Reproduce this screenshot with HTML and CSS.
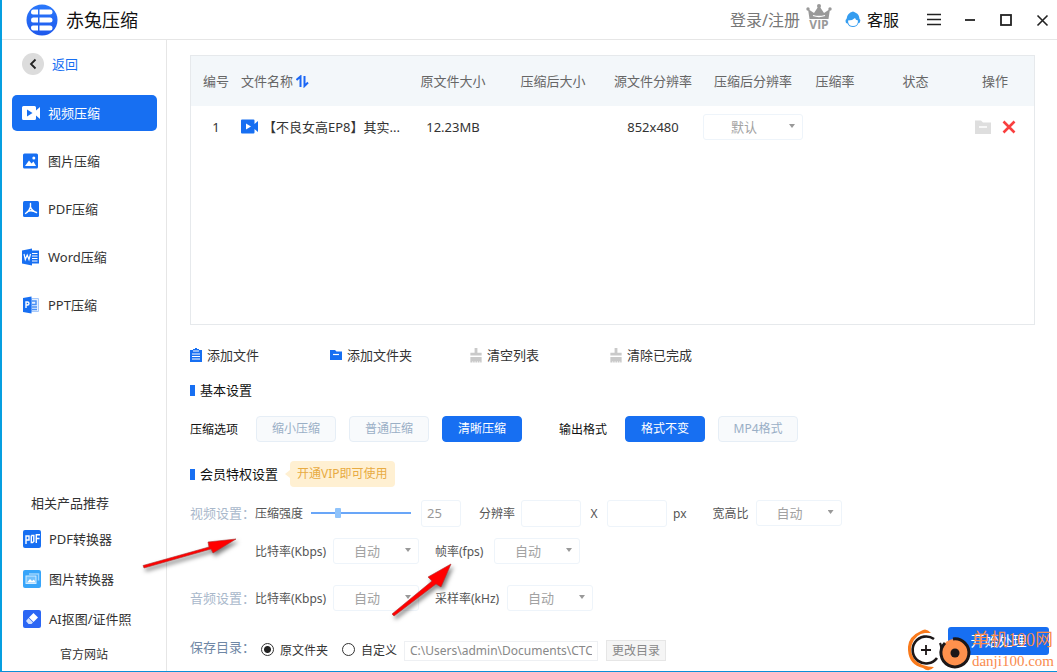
FILE: index.html
```html
<!DOCTYPE html>
<html lang="zh-CN">
<head>
<meta charset="utf-8">
<title>赤兔压缩</title>
<link rel="stylesheet" href="styles.css">
</head>
<body>
<div class="window">
  <header class="titlebar">
    <svg class="logo" viewBox="0 0 32 32" width="32" height="32" aria-hidden="true">
      <defs><linearGradient id="lg" x1="0" y1="0" x2="0" y2="1"><stop offset="0" stop-color="#2a78fb"/><stop offset="1" stop-color="#1e58ec"/></linearGradient></defs>
      <circle cx="16" cy="16" r="15.5" fill="url(#lg)"/>
      <g fill="#fff">
        <path d="M7.500 5.500H12V10.500H7Q5 10.500 5 8.500Q5 5.500 7.500 5.500ZM13.500 5.500H24Q26.500 5.500 26.500 8Q26.500 10.500 24 10.500H13.500Z"/>
        <path d="M7 13.500H12V18.500H7Q5 18.500 5 16Q5 13.500 7 13.500ZM13.500 13.500H24Q26.500 13.500 26.500 16Q26.500 18.500 24 18.500H13.500Z"/>
        <path d="M7 21.500H12V26.500H7.500Q5 26.500 5 23.500Q5 21.500 7 21.500ZM13.500 21.500H24Q26.500 21.500 26.500 24Q26.500 26.500 24 26.500H13.500Z"/>
      </g>
    </svg>
    <h1 class="app-name">赤兔压缩</h1>
    <a class="login" href="#">登录/注册</a>
    <span class="vip">
      <svg viewBox="0 0 26 15" width="26" height="15" aria-hidden="true">
        <g fill="#999"><circle cx="13" cy="2" r="2"/><circle cx="2" cy="5" r="1.700"/><circle cx="24" cy="5" r="1.700"/>
        <path d="M2 5L8 9L12 3H14L18 9L24 5L22.500 15H3.500Z"/></g>
        <path d="M7 11.500Q13 13.500 19 11.500" stroke="#fff" stroke-width="1.300" fill="none"/>
      </svg>
      <span class="vip-text">VIP</span>
    </span>
    <a class="service" href="#">
      <svg viewBox="0 0 16 17" width="16" height="17" aria-hidden="true">
        <path d="M8 0.500Q10 1 11 2Q14 3 14.500 8Q16 8.500 15 11Q14.500 12.500 13.500 12Q12 16 8 16Q4 16 2.500 12.500Q0.500 12.500 0.500 10Q0.500 8.500 1.500 8Q2 2 8 0.500Z" fill="#359df0"/>
        <path d="M3 9.500Q7.500 9.500 10 7Q10.500 9 13 9.500Q13 15 8 15Q3 15 3 9.500Z" fill="#fff"/>
      </svg>客服</a>
    <nav class="win-buttons">
      <button aria-label="菜单"><svg viewBox="0 0 16 16" width="16" height="16"><path d="M1 2.500H15M1 7.500H15M1 12.500H15" stroke="#222" stroke-width="1.600"/></svg></button>
      <button aria-label="最小化"><svg viewBox="0 0 16 16" width="16" height="16"><path d="M3 8H13" stroke="#222" stroke-width="1.800"/></svg></button>
      <button aria-label="最大化"><svg viewBox="0 0 16 16" width="16" height="16"><rect x="3" y="3" width="10" height="10" fill="none" stroke="#222" stroke-width="1.800"/></svg></button>
      <button aria-label="关闭"><svg viewBox="0 0 16 16" width="16" height="16"><path d="M3.500 3.500L13.500 13.500M13.500 3.500L3.500 13.500" stroke="#222" stroke-width="1.600"/></svg></button>
    </nav>
  </header>

  <aside class="sidebar">
    <a class="back" href="#">
      <svg viewBox="0 0 22 22" width="22" height="22" aria-hidden="true"><circle cx="11" cy="11" r="11" fill="#dcdcdc"/><path d="M13.500 6.500L9 11L13.500 15.500" fill="none" stroke="#222" stroke-width="1.800"/></svg>返回</a>
    <nav class="menu">
      <a class="item active" href="#"><svg viewBox="0 0 18 18" width="18" height="18" aria-hidden="true"><path d="M1.500 2H12.500Q14 2 14 3.500V6.500L18 3V15L14 11.500V14.500Q14 16 12.500 16H1.500Q0 16 0 14.500V3.500Q0 2 1.500 2Z" fill="#fff"/><path d="M5 5.500V12.500L10.500 9Z" fill="#176ff2"/></svg>视频压缩</a>
      <a class="item" href="#"><svg viewBox="0 0 18 18" width="18" height="18" aria-hidden="true"><rect x="1" y="1.500" width="15" height="15" rx="1.500" fill="#176ff2"/><path d="M3 14L7 8.500L9.500 11.500L11.500 9.500L14 14Z" fill="#fff"/><circle cx="11.800" cy="6" r="1.500" fill="#fff"/></svg>图片压缩</a>
      <a class="item" href="#"><svg viewBox="0 0 18 18" width="18" height="18" aria-hidden="true"><rect x="1" y="1" width="16" height="16" rx="1.500" fill="#176ff2"/><path d="M8.500 3.500V7Q7.500 11 3.500 13.500M8.500 7Q10 11 14.500 12.500M6 11.300Q9 10.300 11.500 11.300" fill="none" stroke="#fff" stroke-width="1.400" stroke-linecap="round"/></svg>PDF压缩</a>
      <a class="item" href="#"><svg viewBox="0 0 18 18" width="18" height="18" aria-hidden="true"><path d="M10 2.500H17V15.500H10Z" fill="#176ff2"/><path d="M10 5.500H15.500M10 8H15.500M10 10.500H15.500M10 13H15.500" stroke="#fff"/><path d="M0 2.500L10 0.500V17.500L0 15.500Z" fill="#176ff2"/><path d="M2 6L3.300 11.500L5.200 7L7 11.500L8.500 6" fill="none" stroke="#fff" stroke-width="1.200"/></svg>Word压缩</a>
      <a class="item" href="#"><svg viewBox="0 0 18 18" width="18" height="18" aria-hidden="true"><path d="M9.500 2.500H16.500V15.500H9.500Z" fill="#e6f0fe" stroke="#a5c8fa"/><path d="M10 5H14V8.500H10M10 11H15M10 13.500H15" stroke="#4a90f5" stroke-width="1.500" fill="none"/><path d="M1 2L9.500 0.500V17.500L1 16Z" fill="#176ff2"/><path d="M4 12V6H5.500Q7 6 7 7.500Q7 9 5.500 9H4" fill="none" stroke="#fff" stroke-width="1.400"/></svg>PPT压缩</a>
    </nav>
    <section class="related">
      <h2>相关产品推荐</h2>
      <a href="#"><svg viewBox="0 0 18 18" width="18" height="18" aria-hidden="true"><rect width="18" height="18" rx="2" fill="#176ff2"/><path d="M3 14V6H6V10H3M8.300 5.500V12.500H9.500L10.800 11.500V5.500H8.300M13.300 13V4.800H17M13.300 8.500H16.500" fill="none" stroke="#fff" stroke-width="1.400"/></svg>PDF转换器</a>
      <a href="#"><svg viewBox="0 0 18 18" width="18" height="18" aria-hidden="true"><rect width="18" height="18" rx="2" fill="#37a5fa"/><path d="M6 4H15.500V10.500" fill="none" stroke="#9cd3fd" stroke-width="1.500"/><rect x="3" y="6" width="10" height="7.500" fill="#70c0fc" stroke="#d4edff"/><path d="M4 12.500L7 9L9 11L11 9.500L12.500 12.500Z" fill="#fff"/></svg>图片转换器</a>
      <a href="#"><svg viewBox="0 0 18 18" width="18" height="18" aria-hidden="true"><rect width="18" height="18" rx="2" fill="#2b66f4"/><path d="M10.500 3L15 7.500L10.500 12L6 7.500Z" fill="#fff"/><path d="M5.500 8L10 12.500L8.500 14H5.500L3 11Z" fill="#d2e0fd"/></svg>AI抠图/证件照</a>
      <a class="official" href="#">官方网站</a>
    </section>
  </aside>

  <main class="main">
    <div class="list">
      <table>
        <colgroup><col class="c-no"><col class="c-name"><col class="c-m"><col class="c-m"><col class="c-m"><col class="c-m"><col class="c-rate"><col class="c-state"><col class="c-op"></colgroup>
        <thead><tr>
          <th>编号</th>
          <th class="name">文件名称 <svg viewBox="0 0 13 13" width="13" height="13" aria-hidden="true"><path d="M0.500 5L4.500 1.500V12M8.500 1V11L12 7.500" fill="none" stroke="#1b67f5" stroke-width="2"/></svg></th>
          <th>原文件大小</th><th>压缩后大小</th><th>源文件分辨率</th><th>压缩后分辨率</th><th>压缩率</th><th>状态</th><th class="op">操作</th>
        </tr></thead>
        <tbody><tr>
          <td>1</td>
          <td class="name"><span class="file"><svg viewBox="0 0 18 18" width="18" height="18" aria-hidden="true"><path d="M1 1.500H12.500Q13.500 1.500 13.500 2.500V6L17 3V14L13.500 11V14.500Q13.500 15.500 12.500 15.500H1Q0 15.500 0 14.500V2.500Q0 1.500 1 1.500Z" fill="#176ff2"/><path d="M5 5.500V11.500L10 8.500Z" fill="#fff"/></svg>【不良女高EP8】其实...</span></td>
          <td>12.23MB</td><td></td><td>852x480</td>
          <td><span class="select wide"><select aria-label="压缩后分辨率"><option>默认</option></select></span></td>
          <td></td><td></td>
          <td class="op"><span class="ops">
            <button aria-label="打开文件夹"><svg viewBox="0 0 16 16" width="16" height="16"><path d="M0 1.500H6L8 3.500H16V15H0Z" fill="#dedede"/><path d="M4 8H12" stroke="#fff" stroke-width="1.500"/></svg></button>
            <button aria-label="删除"><svg viewBox="0 0 14 14" width="14" height="14"><path d="M1.500 1.500L12.500 12.500M12.500 1.500L1.500 12.500" stroke="#f93f3f" stroke-width="2.600"/></svg></button>
          </span></td>
        </tr></tbody>
      </table>
    </div>

    <div class="toolbar">
      <button><svg viewBox="0 0 12 15" width="12" height="15" aria-hidden="true"><path d="M0 2H3V1H5V0H7V1H9V2H12V14H0Z" fill="#176ff2"/><path d="M3 3H9M2 6H10M2 8.500H10M2 11H10" stroke="#fff"/></svg>添加文件</button>
      <button><svg viewBox="0 0 12 15" width="12" height="15" aria-hidden="true"><path d="M0 2H5L6.500 3.500H12V12H0Z" fill="#176ff2"/><path d="M3 6.500H9" stroke="#fff" stroke-width="1.200"/></svg>添加文件夹</button>
      <button><svg viewBox="0 0 12 16" width="12" height="15" aria-hidden="true"><path d="M4.500 0H7.500V5H12V8H0V5H4.500ZM0 9.500H12V15.500H0Z" fill="#c9c9c9"/><path d="M2.500 14V16M5 14V16M7.500 14V16M10 14V16" stroke="#fff" stroke-width="0.700"/></svg>清空列表</button>
      <button><svg viewBox="0 0 12 16" width="12" height="15" aria-hidden="true"><path d="M4.500 0H7.500V5H12V8H0V5H4.500ZM0 9.500H12V15.500H0Z" fill="#c9c9c9"/><path d="M2.500 14V16M5 14V16M7.500 14V16M10 14V16" stroke="#fff" stroke-width="0.700"/></svg>清除已完成</button>
    </div>

    <h2 class="section basic">基本设置</h2>
    <div class="row options">
      <span class="opt-label">压缩选项</span>
      <button class="chip">缩小压缩</button>
      <button class="chip">普通压缩</button>
      <button class="chip on">清晰压缩</button>
      <span class="opt-label output">输出格式</span>
      <button class="chip on">格式不变</button>
      <button class="chip">MP4格式</button>
    </div>

    <h2 class="section member">会员特权设置<span class="tag">开通VIP即可使用</span></h2>
    <div class="row video">
      <span class="group">视频设置：</span>
      <label for="strength">压缩强度</label>
      <input id="strength" class="slider" type="range" min="0" max="100" value="25">
      <input class="box small" type="text" value="25" aria-label="压缩强度数值">
      <label class="after-box" for="w">分辨率</label>
      <input id="w" class="box" type="text">
      <label class="times" for="h">X</label>
      <input id="h" class="box" type="text">
      <span class="px">px</span>
      <label class="ratio" for="ratio">宽高比</label>
      <span class="select"><select id="ratio"><option>自动</option></select></span>
    </div>
    <div class="row sub">
      <span class="group"></span>
      <label class="rate-label" for="vb">比特率(Kbps)</label>
      <span class="select"><select id="vb"><option>自动</option></select></span>
      <label class="second fps" for="fps">帧率(fps)</label>
      <span class="select"><select id="fps"><option>自动</option></select></span>
    </div>
    <div class="row audio">
      <span class="group">音频设置：</span>
      <label class="rate-label" for="ab">比特率(Kbps)</label>
      <span class="select"><select id="ab"><option>自动</option></select></span>
      <label class="second khz" for="khz">采样率(kHz)</label>
      <span class="select"><select id="khz"><option>自动</option></select></span>
    </div>

    <div class="save">
      <span class="save-title">保存目录：</span>
      <input id="src" type="radio" name="dir" checked><label for="src">原文件夹</label>
      <input id="custom" class="custom" type="radio" name="dir"><label for="custom">自定义</label>
      <input class="path" type="text" aria-label="目录" value="C:\Users\admin\Documents\CTCompress">
      <button class="change">更改目录</button>
      <button class="start">开始处理</button>
    </div>
  </main>

  <svg class="arrow first" viewBox="0 0 100 36" width="100" height="36" aria-hidden="true">
    <path d="M2 28.500L68 10L67 5L95 2L72 16L70 12L3 31Z" fill="#f00" stroke="#a33" stroke-width="0.600"/>
  </svg>
  <svg class="arrow second-arrow" viewBox="0 0 66 60" width="66" height="60" aria-hidden="true">
    <path d="M2 54L42 21L38 17L61 4L51 27L46 24L4 56Z" fill="#f00" stroke="#a33" stroke-width="0.600"/>
  </svg>

  <div class="watermark">
    <svg viewBox="0 0 64 42" width="64" height="42" aria-hidden="true">
      <path d="M23 4Q18 -2 13 2Q-1 8 0 21Q1 36 15 39Q21 44 26 38Q14 38 7 31Q1 23 4 15Q8 5 17 4Z" fill="#f97a1c"/>
      <circle cx="18" cy="21" r="13" fill="#fff"/>
      <path d="M26 10A13.500 13.500 0 1 0 29 29" fill="none" stroke="#1c1718" stroke-width="2.600"/>
      <path d="M32 14Q34 18 33 24" fill="none" stroke="#1c1718" stroke-width="2.200"/>
      <path d="M18 16V26M13 21H23" stroke="#1c1718" stroke-width="1.800"/>
      <circle cx="47" cy="24" r="14" fill="#ff914d"/>
      <path d="M45 10A14 14 0 1 1 37 14" fill="none" stroke="#1c1718" stroke-width="3"/>
      <circle cx="47" cy="24" r="4.500" fill="#1c1718"/>
    </svg>
    <div class="wm-text"><span class="wm-name">单机100网</span><span class="wm-site">danji100.com</span></div>
  </div>
</div>
</body>
</html>
```
FILE: styles.css
```css
* { box-sizing: border-box; }
body {
  margin: 0;
  font: 13px/20px "Noto Sans", "Noto Sans CJK SC", sans-serif;
  color: #333;
  background: #fff;
}
a { color: inherit; text-decoration: none; }
button, input, select { font: inherit; color: inherit; margin: 0; }
button { padding: 0; border: 0; background: none; }
svg { display: block; flex: none; }
h1, h2 { margin: 0; font-weight: 400; }

.window {
  position: relative;
  display: grid;
  grid-template: 40px 1fr / 165px 1fr;
  min-height: 100vh;
  border-left: 2px solid #069fe0;
  border-bottom: 1px solid #0a8fd8;
  overflow: hidden;
}

/* title bar */
.titlebar {
  grid-column: 1 / -1;
  display: flex;
  align-items: center;
  padding: 0 7px 0 24px;
  border-bottom: 1px solid #e6e6e6;
}
.app-name { margin-left: 8px; font-size: 18px; line-height: 24px; color: #111; }
.login { margin-left: auto; font-size: 16px; color: #777; }
.vip { display: flex; flex-direction: column; align-items: center; margin: 0 13px 4px 6px; }
.vip-text { font: bold 12px/12px "Open Sans", sans-serif; color: #999; }
.service { display: flex; align-items: center; gap: 6px; font-size: 16px; color: #111; }
.win-buttons { display: flex; gap: 20px; margin-left: 27px; }

/* sidebar */
.sidebar {
  display: flex;
  flex-direction: column;
  padding: 13px 9px 6px 10px;
  border-right: 1px solid #e6e6e6;
}
.back { display: flex; align-items: center; gap: 8px; padding-left: 10px; color: #176ff2; }
.menu { display: flex; flex-direction: column; gap: 12px; margin-top: 20px; }
.item { display: flex; align-items: center; gap: 8px; height: 36px; padding-left: 10px; border-radius: 5px; }
.item.active { background: #176ff2; color: #fff; }
.related { display: flex; flex-direction: column; gap: 20px; margin-top: auto; padding-left: 11px; }
.related h2 { padding-left: 8px; margin-bottom: -4px; font-size: 13px; }
.related a { display: flex; align-items: center; gap: 8px; }
.related .official { margin-top: -4px; padding-left: 37px; font-size: 12px; }

/* main area */
.main { display: flex; flex-direction: column; padding: 15px 8px 10px 23px; min-width: 0; }
.list { flex: 1; min-height: 120px; margin-right: 14px; border: 1px solid #e6e9ec; }
table { width: 100%; table-layout: fixed; border-collapse: collapse; }
th { height: 50px; padding: 0; font-weight: 400; color: #666; background: #f3f7fa; }
td { height: 42px; padding: 0; text-align: center; }
th.name, td.name { text-align: left; }
th svg { display: inline-block; vertical-align: -2px; }
.c-no { width: 50px; }
.c-name { width: 162px; }
.c-m { width: 100px; }
.c-rate { width: 64px; }
.c-state { width: 97px; }
.op { padding-right: 8px; }
.file { display: flex; align-items: center; gap: 4px; white-space: nowrap; }
.ops { display: flex; align-items: center; justify-content: center; gap: 11px; }

.select { position: relative; display: inline-block; width: 86px; height: 26px; vertical-align: middle; }
.select.wide { width: 100px; }
.select select {
  width: 100%;
  height: 100%;
  padding: 0 20px;
  border: 1px solid #eef4fa;
  border-radius: 3px;
  background: #fff;
  color: #a2a2a2;
  appearance: none;
}
.select.wide select { padding-left: 27px; }
.select::after {
  content: "";
  position: absolute;
  right: 8px;
  top: 10px;
  width: 6px;
  height: 4px;
  background: #999;
  clip-path: polygon(0 0, 100% 0, 50% 100%);
}

.toolbar { display: grid; grid-template-columns: repeat(4, 140px); margin-top: 20px; }
.toolbar button { display: flex; align-items: center; gap: 5px; }

.section { display: flex; align-items: center; height: 20px; font-size: 13px; color: #111; }
.section::before { content: ""; width: 5px; height: 11px; margin-right: 5px; background: #176ff2; }
.basic { margin-top: 15px; }
.member { height: 26px; margin-top: 19px; }
.tag { position: relative; margin-left: 12px; padding: 3px 7px; border-radius: 4px; background: #fff0d2; color: #e8ab42; font-size: 12px; }
.tag::before {
  content: "";
  position: absolute;
  left: -5px;
  top: 9px;
  border: 4px solid transparent;
  border-left-width: 0;
  border-right: 5px solid #fff0d2;
}

.row { display: flex; align-items: center; height: 26px; font-size: 12px; color: #555; white-space: nowrap; }
.options { gap: 13px; margin-top: 16px; color: #111; }
.opt-label { margin-right: 5px; }
.opt-label.output { margin-left: 24px; }
.chip { width: 80px; height: 26px; border: 1px solid #e6eef6; border-radius: 4px; background: #f8fafc; color: #9aafc6; }
.chip.on { border-color: #176ff2; background: #176ff2; color: #fff; }
.group { flex: none; width: 65px; font-size: 13px; color: #a9b8cb; }
.row label, .px, .opt-label { padding-top: 1px; }
.video { margin-top: 13px; }
.sub { margin-top: 12px; }
.audio { margin-top: 21px; }
.slider { width: 100px; height: 16px; margin: 0 10px 0 8px; appearance: none; background: linear-gradient(#69a6f8, #69a6f8) center / 100% 2px no-repeat; }
.slider::-webkit-slider-thumb { appearance: none; width: 6px; height: 10px; border-radius: 1px; background: #8fc3fb; }
.box { width: 60px; height: 27px; padding: 0 5px; border: 1px solid #eef4fa; border-radius: 3px; background: #fff; color: #999; font-size: 13px; }
.box.small { width: 40px; }
.after-box { margin: 0 6px 0 18px; }
.times { width: 26px; text-align: center; }
.px { margin-left: 6px; }
.ratio { margin: 0 7px 0 26px; }
.row .select { font-size: 13px; }
.rate-label { width: 78px; }
.second { margin-left: 16px; }
.fps { width: 59px; }
.khz { width: 72px; }

/* save directory */
.save { display: flex; align-items: flex-end; margin-top: 16px; height: 34px; font-size: 12px; }
.save label { margin-left: 6px; }
.save-title { width: 71px; margin-bottom: 4px; font-size: 13px; color: #6f87a5; }
.save input[type="radio"] {
  width: 13px;
  height: 13px;
  margin-bottom: 5px;
  border: 1px solid #333;
  border-radius: 50%;
  appearance: none;
}
.save input[type="radio"]:checked { background: radial-gradient(circle, #222 3px, transparent 4px); }
.save .custom { margin-left: 14px; }
.path { width: 194px; height: 20px; margin-left: 7px; padding: 0 5px; border: 1px solid #eef0f3; background: #fff; color: #888; }
.change { width: 60px; height: 21px; margin-left: 8px; border: 1px solid #e6e6e6; background: #f5f5f5; color: #888; }
.start { align-self: flex-start; width: 101px; height: 28px; margin-left: auto; border-radius: 3px; background: #176ff2; color: #fff; font-size: 14px; }

/* annotations over the window */
.arrow { position: absolute; filter: drop-shadow(2px 3px 2px rgba(0, 0, 0, 0.5)); pointer-events: none; }
.arrow.first { left: 139px; top: 537px; }
.arrow.second-arrow { left: 388px; top: 560px; }
.watermark { position: absolute; right: 3px; bottom: 0; display: flex; align-items: flex-end; pointer-events: none; }
.wm-text { display: flex; flex-direction: column; color: #f98b4e; font-family: "Liberation Serif", "Noto Sans CJK SC", serif; }
.wm-name { font-size: 18px; line-height: 22px; }
.wm-site { font-size: 15px; line-height: 20px; }
```
